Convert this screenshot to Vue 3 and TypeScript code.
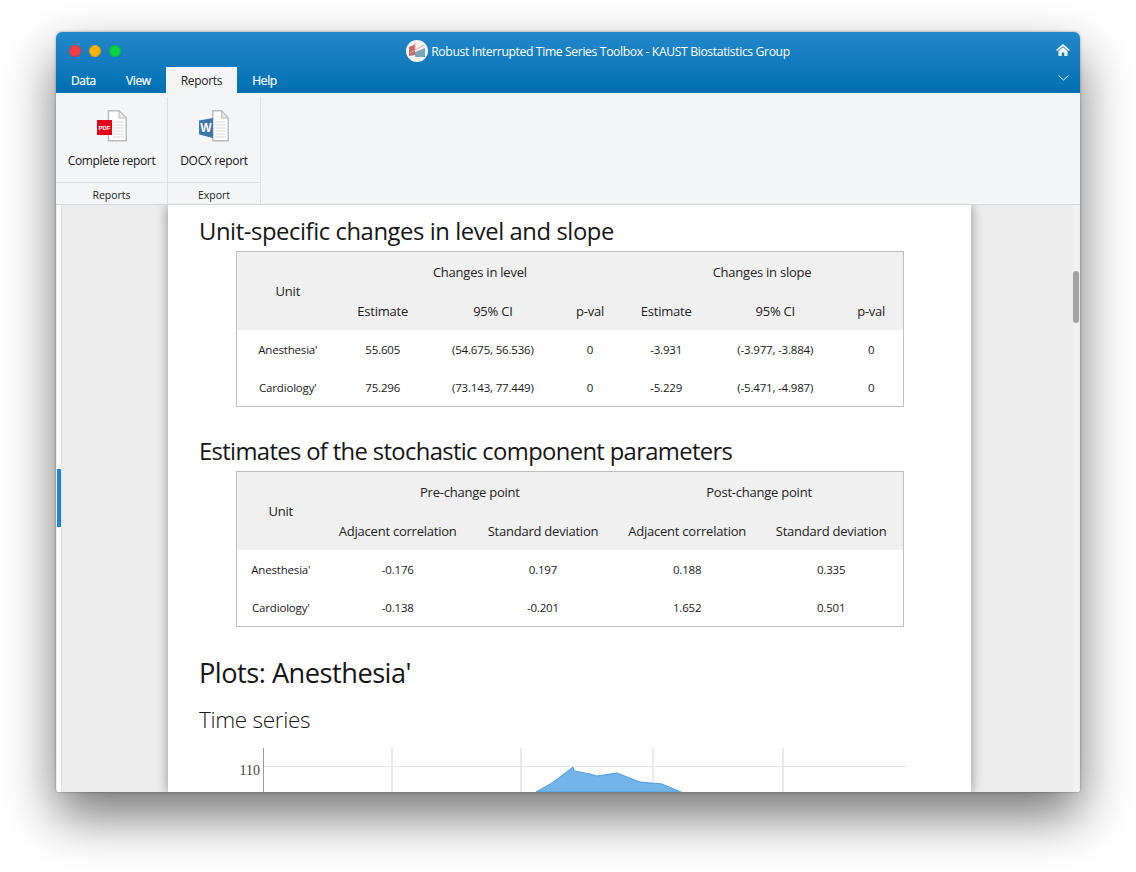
<script setup lang="ts">
interface Row { cells: string[] }
const levelRows: Row[] = [
  { cells: ["Anesthesia'", '55.605', '(54.675, 56.536)', '0', '-3.931', '(-3.977, -3.884)', '0'] },
  { cells: ["Cardiology'", '75.296', '(73.143, 77.449)', '0', '-5.229', '(-5.471, -4.987)', '0'] },
]
const levelCols = [102, 88, 132, 62, 90, 128, 64]
const levelHead = ['Estimate', '95% CI', 'p-val', 'Estimate', '95% CI', 'p-val']
const stochRows: Row[] = [
  { cells: ["Anesthesia'", '-0.176', '0.197', '0.188', '0.335'] },
  { cells: ["Cardiology'", '-0.138', '-0.201', '1.652', '0.501'] },
]
const stochCols = [88, 146, 144, 144, 144]
const stochHead = ['Adjacent correlation', 'Standard deviation', 'Adjacent correlation', 'Standard deviation']
const tabs = ['Data', 'View', 'Reports', 'Help']
</script>

<template>
  <div class="stage">
    <div class="window">
      <header class="bar">
        <div class="titlerow">
          <div class="lights">
            <span class="light red"></span>
            <span class="light amber"></span>
            <span class="light green"></span>
          </div>
          <div class="title">
            <svg class="logo" width="22" height="22" viewBox="0 0 22 22">
              <circle cx="11" cy="11" r="11" fill="#f6f3f1" />
              <path d="M3 7 L9 4.5 L9 15 L3 16 Z" fill="#c9686a" />
              <path d="M9 12 L19 8 L19 17 L9 17 Z" fill="#7ba4bd" />
              <path d="M9 9 L9 3 M4 13 L18 5" stroke="#eaa5a6" stroke-width="1" fill="none" />
            </svg>
            <span>Robust Interrupted Time Series Toolbox - KAUST Biostatistics Group</span>
          </div>
          <svg class="home" width="14" height="12" viewBox="0 0 14 12">
            <path d="M7 0 L14 6 L12.8 7 L7 2.2 L1.2 7 L0 6 Z" fill="#fff" />
            <path d="M2.5 7 L7 3.3 L11.5 7 V12 H8.3 V8.6 H5.7 V12 H2.5 Z" fill="#fff" />
          </svg>
        </div>
        <div class="tabrow">
          <nav class="tabs">
            <span v-for="t in tabs" :key="t" class="tab" :class="{ active: t === 'Reports' }">{{ t }}</span>
          </nav>
          <svg class="chev" width="11" height="6" viewBox="0 0 11 6">
            <path d="M0.5 0.5 L5.5 5 L10.5 0.5" stroke="#dcecf7" stroke-width="1" fill="none" />
          </svg>
        </div>
      </header>

      <section class="ribbon">
        <div class="group g1">
          <div class="gbody">
            <svg width="30" height="32" viewBox="0 0 30 32">
              <path d="M11.5 0.75 H22 L29.25 8 V30.75 H11.5 Z" fill="#fff" stroke="#bcbcbc" stroke-width="1.5" />
              <path d="M22 0.75 V8 H29.25 Z" fill="#e8e8e8" stroke="#bcbcbc" />
              <path d="M16 12 H27 M16 15 H27 M16 18 H27 M16 21 H27 M16 24 H27 M16 27 H27" stroke="#d6d6d6" />
              <rect x="0" y="10" width="15" height="15" fill="#e2001a" />
              <text x="7.5" y="20" class="pdf">PDF</text>
            </svg>
            <span class="glabel">Complete report</span>
          </div>
          <div class="gfoot">Reports</div>
        </div>
        <div class="group g2">
          <div class="gbody">
            <svg width="30" height="32" viewBox="0 0 30 32">
              <path d="M13.75 0.75 H22.5 L29.25 8 V30.75 H13.75 Z" fill="#fff" stroke="#bcbcbc" stroke-width="1.5" />
              <path d="M22.5 0.75 V8 H29.25 Z" fill="#e8e8e8" stroke="#bcbcbc" />
              <path d="M17 12 H27 M17 15 H27 M17 18 H27 M17 21 H27 M17 24 H27 M17 27 H27" stroke="#d6d6d6" />
              <path d="M0 10.5 L14 8 V28 L0 24.5 Z" fill="#3f78a8" />
              <text x="7" y="22" class="word">W</text>
            </svg>
            <span class="glabel">DOCX report</span>
          </div>
          <div class="gfoot">Export</div>
        </div>
      </section>

      <div class="content">
        <div class="strip"><span class="marker"></span></div>
        <div class="gutter left"></div>
        <main class="page">
          <h2 class="first">Unit-specific changes in level and slope</h2>
          <table class="tbl">
            <colgroup><col v-for="(w, i) in levelCols" :key="i" :style="{ width: w + 'px' }" /></colgroup>
            <thead>
              <tr>
                <th rowspan="2">Unit</th>
                <th colspan="3">Changes in level</th>
                <th colspan="3">Changes in slope</th>
              </tr>
              <tr><th v-for="(h, i) in levelHead" :key="i">{{ h }}</th></tr>
            </thead>
            <tbody>
              <tr v-for="r in levelRows" :key="r.cells[0]">
                <td v-for="(c, i) in r.cells" :key="i">{{ c }}</td>
              </tr>
            </tbody>
          </table>

          <h2 class="second">Estimates of the stochastic component parameters</h2>
          <table class="tbl">
            <colgroup><col v-for="(w, i) in stochCols" :key="i" :style="{ width: w + 'px' }" /></colgroup>
            <thead>
              <tr>
                <th rowspan="2">Unit</th>
                <th colspan="2">Pre-change point</th>
                <th colspan="2">Post-change point</th>
              </tr>
              <tr><th v-for="(h, i) in stochHead" :key="i">{{ h }}</th></tr>
            </thead>
            <tbody>
              <tr v-for="r in stochRows" :key="r.cells[0]">
                <td v-for="(c, i) in r.cells" :key="i">{{ c }}</td>
              </tr>
            </tbody>
          </table>

          <h1>Plots: Anesthesia'</h1>
          <h3>Time series</h3>
          <svg class="chart" width="760" height="44" viewBox="168 748 760 44">
            <path d="M392 748 V792 M521 748 V792 M653 748 V792 M783 748 V792" stroke="#dcdcdc" stroke-width="1.2" />
            <path d="M264 766.5 H906" stroke="#e6e6e6" />
            <path d="M536 792 L552 783 L573 767 L574 771 L590 774 L597 776 L617 773 L640 782 L662 784 L681 792 Z" fill="#72b4e8" stroke="#4d9fe0" stroke-width="1" />
            <path d="M263.5 748 V792" stroke="#9a9a9a" />
            <text x="260" y="774.5" class="tick">110</text>
          </svg>
        </main>
        <div class="gutter right">
          <div class="track"><span class="thumb"></span></div>
        </div>
      </div>
    </div>
  </div>
</template>

<style scoped>
.stage {
  padding: 32px 56px 0;
  height: 872px;
  box-sizing: border-box;
  overflow: hidden;
  background: #fff;
  font-family: "Open Sans", "Noto Sans", sans-serif;
  color: #161616;
}
.window {
  width: 1024px;
  height: 760px;
  display: flex;
  flex-direction: column;
  overflow: hidden;
  border-radius: 6px 6px 3px 3px;
  box-shadow: 0 24px 52px rgba(0, 0, 0, 0.55), 0 0 3px rgba(0, 0, 0, 0.35);
  background: #ececec;
}
.bar {
  height: 61px;
  flex: none;
  background: linear-gradient(#2488ca, #0070b1);
  color: #fff;
  display: flex;
  flex-direction: column;
}
.titlerow {
  height: 35px;
  display: flex;
  align-items: center;
  padding: 0 10px 0 13px;
}
.lights { display: flex; gap: 8px; width: 52px; margin-top: 2px; }
.light { width: 12px; height: 12px; border-radius: 50%; box-sizing: border-box; }
.red { background: #fc3b42; border: 1px solid #e0353c; }
.amber { background: #fdb600; border: 1px solid #e4a400; }
.green { background: #0ed145; border: 1px solid #0dbb3e; }
.title {
  flex: 1;
  display: flex;
  align-items: center;
  justify-content: center;
  gap: 3px;
  font-size: 12.2px;
  letter-spacing: -0.38px;
  font-weight: 500;
  padding-left: 19px;
  margin-top: 3px;
}
.logo { flex: none; }
.home { flex: none; }
.tabrow {
  height: 26px;
  display: flex;
  justify-content: space-between;
  align-items: flex-start;
  padding-right: 11px;
}
.tabs { display: flex; }
.tab {
  height: 26px;
  line-height: 28px;
  padding: 0 15px;
  font-size: 12px;
  font-weight: 500;
  letter-spacing: -0.35px;
  -webkit-text-stroke: 0.2px #fff;
}
.tab.active {
  background: #f4f5f7;
  color: #1d1d1d;
  font-weight: 400;
  letter-spacing: -0.3px;
  -webkit-text-stroke: 0;
}
.chev { margin-top: 8px; }
.ribbon {
  height: 112px;
  flex: none;
  display: flex;
  background: #f4f5f7;
  border-bottom: 1px solid #d4d6da;
  box-sizing: border-box;
  position: relative;
  z-index: 2;
}
.group {
  display: flex;
  flex-direction: column;
  margin-top: 4px;
  border-right: 1px solid #dcdde0;
  box-sizing: border-box;
}
.g1 { width: 112px; }
.g2 { width: 93px; }
.gbody {
  height: 86px;
  flex: none;
  display: flex;
  flex-direction: column;
  align-items: center;
  padding-top: 13px;
  box-sizing: border-box;
  border-bottom: 1px solid #dcdde0;
}
.glabel {
  margin-top: 11px;
  font-size: 12px;
  letter-spacing: -0.32px;
  line-height: 16px;
  white-space: nowrap;
}
.gfoot {
  flex: 1;
  min-height: 0;
  text-align: center;
  font-size: 10.5px;
  line-height: 24px;
  color: #222;
}
.pdf {
  font: 700 6px "Liberation Sans", sans-serif;
  fill: #fff;
  text-anchor: middle;
}
.word {
  font: 700 12px "Liberation Sans", sans-serif;
  fill: #fff;
  text-anchor: middle;
}
.content {
  flex: 1;
  min-height: 0;
  display: flex;
  overflow: hidden;
}
.strip {
  flex: none;
  box-sizing: border-box;
  margin-left: 1px;
  width: 5px;
  background: #fff;
  border-right: 1px solid #dedede;
}
.marker {
  display: block;
  width: 4px;
  height: 58px;
  margin-top: 264px;
  background: #2187c9;
}
.gutter {
  background: #ececec;
}
.gutter.left {
  flex: none;
  width: 106px;
}
.gutter.right {
  flex: 1;
  display: flex;
  justify-content: flex-end;
  padding-right: 1px;
}
.track {
  width: 6px;
  background: #f1f1f1;
}
.thumb {
  display: block;
  height: 52px;
  margin-top: 66px;
  background: #a3a3a3;
  border-radius: 3px;
}
.page {
  width: 803px;
  flex: none;
  box-sizing: border-box;
  padding: 0 0 0 31px;
  background: #fff;
  box-shadow: 0 0 11px rgba(0, 0, 0, 0.4);
  position: relative;
}
h1, h2, h3 { margin: 0; font-weight: 400; color: #161616; white-space: nowrap; }
h2 {
  font-size: 23.8px;
  line-height: 32px;
}
h2.first { margin-top: 10px; letter-spacing: -0.42px; }
h2.second { letter-spacing: -0.65px; }
h1 {
  margin-top: 28px;
  font-size: 27.2px;
  letter-spacing: -0.5px;
  line-height: 36px;
}
h3 {
  margin-top: 14px;
  font-size: 22.5px;
  font-weight: 300;
  letter-spacing: -0.3px;
  line-height: 30px;
}
.tbl {
  margin: 4px 0 0 37px;
  width: 668px;
  height: 156px;
  table-layout: fixed;
  border-collapse: collapse;
  border: 1px solid #bdbec2;
  box-sizing: border-box;
}
.tbl + h2 { margin-top: 28px; }
.tbl th {
  background: #f0f0f0;
  font-weight: 400;
  font-size: 13px;
  letter-spacing: -0.23px;
  height: 39px;
  padding: 2px 0 0;
  box-sizing: border-box;
  color: #222;
}
.tbl th[rowspan] { padding-top: 0; }
.tbl td {
  text-align: center;
  font-size: 11.5px;
  letter-spacing: -0.18px;
  height: 38px;
  padding: 1px 0 0;
  box-sizing: border-box;
  color: #1a1a1a;
}
.chart {
  display: block;
  margin: 13px 0 0 -31px;
}
.tick {
  font: 14px "Liberation Serif", serif;
  fill: #444;
  text-anchor: end;
}
</style>
